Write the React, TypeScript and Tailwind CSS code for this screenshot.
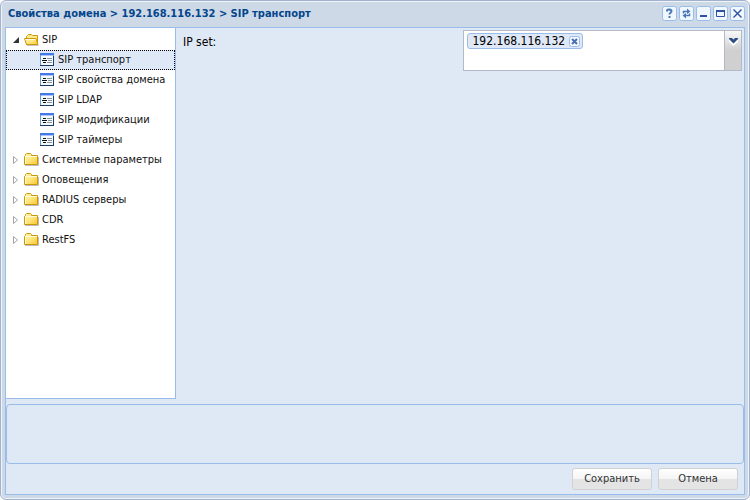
import { useState, type ReactNode } from "react";

interface TreeItem {
  label: string;
  children?: string[];
}

const treeItems: TreeItem[] = [
  {
    label: "SIP",
    children: [
      "SIP транспорт",
      "SIP свойства домена",
      "SIP LDAP",
      "SIP модификации",
      "SIP таймеры",
    ],
  },
  { label: "Системные параметры" },
  { label: "Оповещения" },
  { label: "RADIUS серверы" },
  { label: "CDR" },
  { label: "RestFS" },
];

function FolderIcon({ open }: { open?: boolean }) {
  return (
    <svg width="16" height="16" viewBox="0 0 16 16" className="shrink-0">
      <defs>
        <linearGradient id="folder" x1="0" y1="0" x2="1" y2="1">
          <stop offset="0" stopColor="#fff6b0" />
          <stop offset="0.5" stopColor="#ffe680" />
          <stop offset="1" stopColor="#fbc52c" />
        </linearGradient>
      </defs>
      {open ? (
        <>
          <path d="M3 13.5H14.5" stroke="#c4c4c4" />
          <path
            d="M2.5 12.5V4.5L3.5 3.5L4.5 2.5H7.5L8.5 3.5H13.5V12.5Z"
            fill="#ffe98a"
            stroke="#c9980c"
          />
          <path
            d="M0.5 6.5H12L14 12.5H2.5Z"
            fill="url(#folder)"
            stroke="#c9980c"
            strokeLinejoin="round"
          />
          <path d="M1.5 7.5H11.5" stroke="#fffbe0" />
        </>
      ) : (
        <>
          <path d="M1 13.5H14.5V5" fill="none" stroke="#bcbcbc" />
          <path
            d="M0.5 12.5V4.5L1.5 3.5V2.5L2.5 1.5H6.5L7.5 2.5V3.5H13.5V12.5Z"
            fill="url(#folder)"
            stroke="#c9980c"
          />
          <path d="M1.5 12V4.5H13" fill="none" stroke="#fffbd8" />
        </>
      )}
    </svg>
  );
}

function FormIcon() {
  return (
    <svg
      width="16"
      height="16"
      viewBox="0 0 16 16"
      shapeRendering="crispEdges"
      className="shrink-0"
    >
      <rect x="0" y="1" width="14" height="13" fill="#6b9bd2" />
      <rect x="1" y="4" width="12" height="9" fill="#f3f9fd" />
      <rect x="0" y="1" width="14" height="2" fill="#4478e8" />
      <rect x="1" y="3" width="12" height="1" fill="#a9c6f4" />
      <path
        d="M3 6h3v1H3zM2 8h5v1H2zM3 10h3v1H3z"
        fill="#101010"
      />
      <path d="M7 6h5v1H7zM8 8h4v1H8zM7 10h5v1H7z" fill="#8a949e" />
      <rect x="0" y="13" width="14" height="1" fill="#1a3c6c" />
      <rect x="13" y="4" width="1" height="10" fill="#1a3c6c" />
    </svg>
  );
}

function Arrow({ open }: { open?: boolean }) {
  return (
    <svg width="16" height="16" viewBox="0 0 16 16" className="shrink-0">
      {open ? (
        <path d="M11 5V11H5Z" fill="#333" />
      ) : (
        <path d="M5.5 4.5L9.5 8L5.5 11.5Z" fill="#fff" stroke="#a3a3a3" />
      )}
    </svg>
  );
}

const tools: { label: string; icon: ReactNode }[] = [
  {
    label: "Справка",
    icon: (
      <path
        d="M5 5.5V4.5C5 3.2 9.5 3.2 9.5 5C9.5 6.8 7.5 6.6 7.5 8.5M7.5 10V12"
        fill="none"
        stroke="#4a7ab5"
        strokeWidth="2"
      />
    ),
  },
  {
    label: "Обновить",
    icon: (
      <>
        <path
          d="M4.5 7.5V5.5H8.5M10.5 7.5V9.5H6.5"
          fill="none"
          stroke="#4a7ab5"
          strokeWidth="1.5"
        />
        <path
          d="M8 2.5L11.5 5.5L8 8ZM7 7L3.5 9.5L7 12.5Z"
          fill="#4a7ab5"
        />
      </>
    ),
  },
  {
    label: "Свернуть",
    icon: <path d="M4 10H11" stroke="#2d52a0" strokeWidth="2" />,
  },
  {
    label: "Развернуть",
    icon: (
      <>
        <path d="M3.5 4V10.5H11.5V4" fill="none" stroke="#2d52a0" />
        <path d="M3 5H12" stroke="#2d52a0" strokeWidth="2" />
      </>
    ),
  },
  {
    label: "Закрыть",
    icon: (
      <path
        d="M3.5 3.5L11.5 11.5M11.5 3.5L3.5 11.5"
        stroke="#2d52a0"
        strokeWidth="1.4"
      />
    ),
  },
];

function Tree() {
  const [selected, setSelected] = useState("SIP транспорт");

  return (
    <nav className="w-[170px] shrink-0 border-r border-b border-[#99bce8] bg-white pt-0.5 text-[#111]">
      <ul>
        {treeItems.map((item) => (
          <li key={item.label}>
            <button
              type="button"
              aria-expanded={!!item.children}
              className="flex h-5 w-full items-center pl-0.5 text-left whitespace-nowrap"
            >
              <Arrow open={!!item.children} />
              <FolderIcon open={!!item.children} />
              <span className="pl-0.5">{item.label}</span>
            </button>
            {item.children && (
              <ul>
                {item.children.map((child) => (
                  <li key={child}>
                    <button
                      type="button"
                      onClick={() => setSelected(child)}
                      className={`flex h-5 w-full items-center border border-dotted pl-[33px] text-left whitespace-nowrap ${
                        child === selected
                          ? "border-black bg-[#dfe8f6]"
                          : "border-transparent"
                      }`}
                    >
                      <FormIcon />
                      <span className="pl-0.5">{child}</span>
                    </button>
                  </li>
                ))}
              </ul>
            )}
          </li>
        ))}
      </ul>
    </nav>
  );
}

function IpSetField() {
  return (
    <div className="flex min-w-0 flex-1 items-start justify-between pt-0.5 pr-0.5 pl-[7px] text-xs">
      <label htmlFor="ip-set" className="pt-1 leading-4">
        IP set:
      </label>
      <div className="flex h-[41px] w-1/2 border border-[#b5b8c8] bg-white">
        <div className="flex min-w-0 flex-1 items-start pt-0.5 pl-[3px]">
          <span className="flex h-4 shrink-0 items-center gap-1 rounded-[3px] border border-[#99bce8] bg-[#dfe8f6] pr-0.5 pl-[5px]">
            192.168.116.132
            <button type="button" aria-label="Удалить">
              <svg width="11" height="11" viewBox="0 0 11 11">
                <rect
                  x="0.5"
                  y="0.5"
                  width="10"
                  height="10"
                  rx="2"
                  fill="#f4f9ff"
                  stroke="#99bce8"
                />
                <path
                  d="M3 3L8 8M8 3L3 8"
                  stroke="#4a70ad"
                  strokeWidth="2"
                />
              </svg>
            </button>
          </span>
          <input id="ip-set" className="min-w-0 flex-1 outline-none" />
        </div>
        <button
          type="button"
          aria-label="Открыть список"
          className="flex w-[17px] items-start justify-center border-l border-[#b5b8c8] bg-linear-to-b from-[#f8f8f8] from-0% via-[#d0d0d0] via-50% to-[#d0d0d0]"
        >
          <svg width="11" height="17" viewBox="0 0 11 17">
            <path d="M1 11L5.5 15L10 11V9H1Z" fill="#fff" />
            <path d="M1 7H4L5.5 8.5L7 7H10V8L5.5 12.5L1 8Z" fill="#2c4f86" />
          </svg>
        </button>
      </div>
    </div>
  );
}

function FooterButton({ children }: { children: ReactNode }) {
  return (
    <button
      type="button"
      className="h-[22px] w-20 rounded-[3px] border border-[#d1d1d1] bg-linear-to-b from-white from-0% via-[#f4f4f4] via-50% to-[#e4e4e4] to-50% pt-px text-[#333]"
    >
      {children}
    </button>
  );
}

export default function App() {
  return (
    <div className="flex h-screen flex-col rounded-md border border-[#a2b1cd] bg-[#ced9e7] px-1 pb-1 font-['DejaVu_Sans_Condensed','DejaVu_Sans',sans-serif] text-[11px] text-black shadow-[inset_0_0_0_1px_#f0f4f9]">
      <header className="flex h-[26px] shrink-0 items-start justify-between pt-[5px] pl-[3px]">
        <h1 className="font-bold text-[#04468c]">
          Свойства домена &gt; 192.168.116.132 &gt; SIP транспорт
        </h1>
        <div className="flex gap-0.5">
          {tools.map((tool) => (
            <button
              key={tool.label}
              type="button"
              aria-label={tool.label}
              className="size-[15px]"
            >
              <svg width="15" height="15" viewBox="0 0 15 15">
                <rect
                  x="0.5"
                  y="0.5"
                  width="14"
                  height="14"
                  rx="2"
                  fill="#f1f7fe"
                  stroke="#99bce8"
                />
                {tool.icon}
              </svg>
            </button>
          ))}
        </div>
      </header>
      <main className="flex min-h-0 flex-1 flex-col border border-[#99bce8] bg-[#dfe9f5]">
        <div className="flex min-h-0 flex-1">
          <Tree />
          <IpSetField />
        </div>
        <section className="mt-[5px] h-[60px] shrink-0 rounded-[4px] border border-[#99bce8]" />
        <footer className="flex shrink-0 justify-end gap-1.5 px-1.5 py-1">
          <FooterButton>Сохранить</FooterButton>
          <FooterButton>Отмена</FooterButton>
        </footer>
      </main>
    </div>
  );
}
